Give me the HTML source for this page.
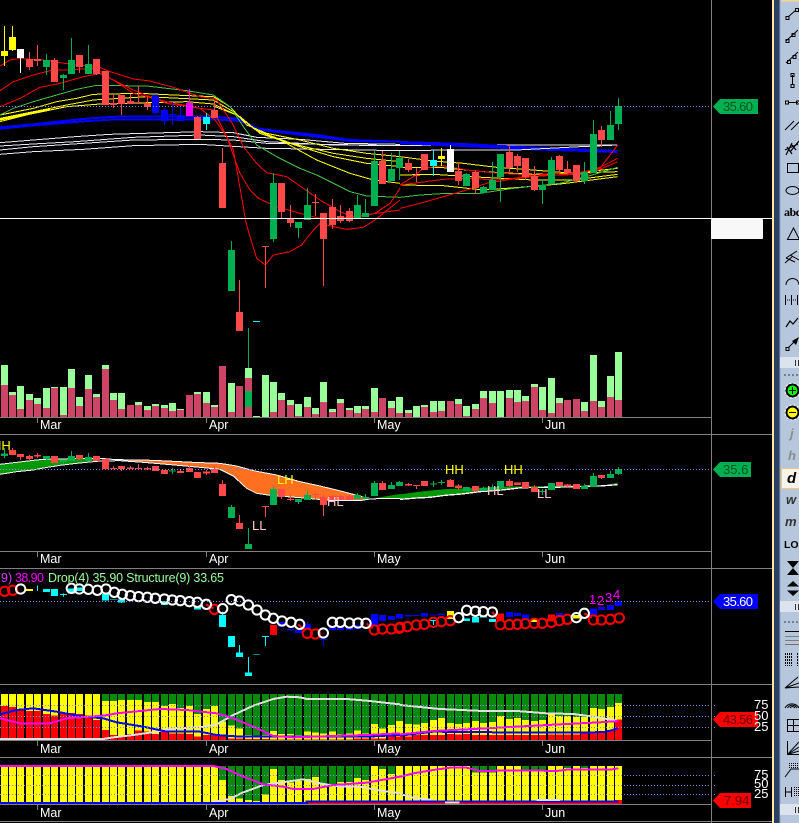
<!DOCTYPE html>
<html>
<head>
<meta charset="utf-8">
<style>
html,body{margin:0;padding:0;background:#000;width:799px;height:823px;overflow:hidden}
svg{display:block;position:absolute;left:0;top:0}
text{font-family:"Liberation Sans",sans-serif}
.c{shape-rendering:crispEdges}
.n{fill:none}
</style>
</head>
<body>
<svg width="799" height="823" viewBox="0 0 799 823">
<rect width="799" height="823" fill="#000"/>

<!-- MAIN MOVING AVERAGES -->
<g class="n c" stroke-width="3" transform="scale(.33333)">
<g stroke="#e6e6f6">
<path d="M0 428 100 420 225 410 330 403 500 398 600 395 700 398 770 412 900 418 1035 430 1200 433"/>
<path d="M0 438 100 432 225 425 400 412 600 405 700 410 800 425 1000 435 1200 437"/>
<path d="M0 450 100 440 250 430 400 420 600 418 700 420 800 430 1200 437"/>
<path d="M0 463 100 455 250 448 400 437 600 433 800 445 1200 452"/>
</g>
<g stroke="#0000ff" stroke-width="6">
<path d="M0 382 100 373 200 362 270 355 350 350 640 350 720 357 770 385 850 395 950 405 1050 420 1200 425"/>
<path d="M0 386 100 376 250 364 350 358 640 358 720 363 770 388 900 404 1050 423 1200 425"/>
</g>
<g stroke="#ffff00">
<path d="M0 358 150 328" stroke-width="8"/>
<path d="M0 345 100 325 170 305 230 295 280 283 420 280 520 285 640 290 690 320 740 375 800 400 900 420 1000 445 1100 460 1200 470"/>
<path d="M0 355 100 335 200 315 280 300 440 290 540 295 640 300 700 335 760 385 850 425 950 480 1050 520 1120 540 1200 550"/>
<path d="M0 365 100 340 200 320 300 312 560 305 640 312 720 350 780 400 900 440 1000 470 1100 490 1200 500"/>
<path d="M640 318 710 345 770 392 880 432 1000 460 1100 475 1200 485"/>
</g>
<path stroke="#44c044" d="M0 345 40 325 100 305 170 285 230 268 290 256 440 258 560 272 640 285 690 320 730 380 770 435 830 470 900 505 950 525 1000 550 1050 575 1100 588 1200 592"/>
<g stroke="#ff0000">
<path d="M0 198 30 180 60 175 90 178 120 180 150 182 180 188 230 195 290 198 330 215 400 237 450 243 520 262 600 290 640 295 650 300 697 370 730 440 770 490 800 518 860 530 960 600 1020 635 1070 655 1125 640 1170 610 1200 565"/>
<path d="M0 272 40 245 100 225 150 212 290 205 330 235 400 270 500 310 600 325 640 330 660 370 700 450 730 620 736 660 750 710 770 775 796 795 820 765 870 755 905 735 940 690 960 670 1000 680 1040 688 1090 682 1125 660 1200 600"/>
<path d="M0 320 60 295 120 262 180 250 250 230 300 220 340 240 400 280 500 305 600 325 645 360 680 410 720 520 750 570 775 595 830 620 900 640 960 655 1020 655 1130 640 1200 630"/>
</g>
</g>
<g class="n c" stroke-width="3" transform="translate(400 80) scale(.33333)">
<path stroke="#e6e6f6" d="M0 197 150 195 470 195 653 195"/>
<g stroke="#0000ff" stroke-width="6">
<path d="M0 186 190 192 400 203 653 213"/>
<path d="M0 190 190 198 400 208 653 216"/>
</g>
<path stroke="#e6e6f6" d="M0 212 150 210 350 210 540 200 653 195"/>
<g stroke="#ffff00">
<path d="M0 230 100 243 190 250 290 262 400 270 520 280 653 265"/>
<path d="M0 262 120 262 250 275 400 283 653 275"/>
<path d="M0 285 100 283 210 290 400 300 520 300 653 283"/>
<path d="M0 315 130 317 250 330 360 322 480 312 653 290"/>
</g>
<path stroke="#44c044" d="M0 352 60 345 140 340 240 340 340 325 480 310 560 290 653 262"/>
<g stroke="#ff0000">
<path d="M0 385 60 370 130 350 200 330 260 310 340 297 400 290 470 285 560 275 600 262 653 235"/>
<path d="M0 315 40 290 70 265 130 257 200 270 300 280 400 285 500 285 600 265 653 195"/>
<path d="M0 315 130 298 200 295 290 300 340 295 450 280 560 285 600 268 653 245"/>
</g>
</g>

<!-- MAIN CANDLES -->
<g class="n c">
<path stroke="#00b050" d="M46.5 54V75M63.5 74V90M71.5 38V74M88.5 45V74M231.5 241V250M248.5 328V407M273.5 173V242M298.5 222V238M307.5 188V220M357.5 195V218M365.5 199V217M374.5 151V206M391.5 153V181M399.5 151V180M466.5 173V186M483.5 186V193M492.5 162V190M500.5 154V202M542.5 179V204M551.5 157V184M584.5 162V184M593.5 120V173M610.5 111V140M618.5 98V130"/>
<path stroke="#ff4848" d="M29.5 52V70M37.5 45V66M54.5 58V82M79.5 55V73M96.5 59V75M105.5 71V105M113.5 94V108M121.5 95V115M130.5 94V104M138.5 86V104M147.5 96V110M197.5 116V139M214.5 100V118M222.5 148V208M239.5 280V331M265.5 246V288M281.5 183V219M290.5 205V227M315.5 194V216M323.5 213V286M332.5 199V229M340.5 205V223M349.5 208V222M382.5 151V184M408.5 159V172M416.5 168V182M424.5 154V170M458.5 162V185M475.5 170V194M509.5 144V174M517.5 154V172M525.5 158V180M534.5 166V191M559.5 155V172M567.5 161V174M576.5 165V181M601.5 126V147"/>
<path stroke="#ffff00" d="M4.5 26V66M12.5 26V51M441.5 148V166"/>
<path stroke="#ffffff" d="M20.5 49V73M450.5 145V172"/>
<path stroke="#0000ff" d="M155.5 95V114M164.5 108V125M172.5 102V125M180.5 106V121"/>
<path stroke="#ff00ff" d="M189.5 89V116"/>
<path stroke="#00ffff" d="M206.5 113V130M433.5 150V176"/>
<!-- volume bars -->
<path stroke="#99ff99" stroke-width="7" d="M4.5 365V417M12.5 392V417M20.5 386V417M29.5 394V417M37.5 398V417M46.5 388V417M54.5 387V417M63.5 387V417M71.5 369V417M79.5 397V417M88.5 375V417M96.5 394V417M105.5 365V417M113.5 393V417M121.5 393V417M138.5 402V417M147.5 406V417M155.5 404V417M164.5 405V417M172.5 403V417M180.5 409V417M197.5 392V417M206.5 392V417M214.5 405V417M231.5 383V417M248.5 368V417M256.5 416V417M265.5 375V417M273.5 382V417M281.5 393V417M290.5 400V417M298.5 404V417M307.5 397V417M315.5 408V417M323.5 382V417M332.5 409V417M340.5 399V417M349.5 408V417M357.5 406V417M365.5 406V417M374.5 388V417M391.5 401V417M399.5 397V417M408.5 410V417M416.5 406V417M424.5 405V417M433.5 401V417M441.5 401V417M458.5 399V417M466.5 406V417M475.5 404V417M483.5 391V417M492.5 391V417M500.5 391V417M509.5 390V417M517.5 390V417M525.5 396V417M534.5 384V417M542.5 387V417M551.5 378V417M559.5 398V417M584.5 402V417M593.5 355V417M601.5 401V417M610.5 376V417M618.5 352V417"/>
<path stroke="#cc4466" stroke-width="7" d="M4.5 385V417M12.5 395V417M20.5 409V417M29.5 400V417M37.5 404V417M46.5 408V417M54.5 388V417M63.5 415V417M71.5 388V417M79.5 406V417M88.5 389V417M96.5 397V417M105.5 369V417M113.5 400V417M121.5 409V417M130.5 405V417M138.5 405V417M147.5 410V417M155.5 406V417M164.5 408V417M172.5 411V417M180.5 410V417M189.5 395V417M197.5 394V417M206.5 403V417M214.5 407V417M222.5 366V417M231.5 412V417M239.5 386V417M248.5 378V417M273.5 412V417M281.5 400V417M290.5 405V417M298.5 416V417M307.5 407V417M315.5 414V417M323.5 402V417M332.5 412V417M340.5 403V417M349.5 410V417M357.5 413V417M365.5 409V417M374.5 412V417M382.5 398V417M391.5 408V417M399.5 413V417M408.5 413V417M424.5 407V417M433.5 412V417M441.5 411V417M450.5 401V417M458.5 404V417M466.5 416V417M475.5 409V417M483.5 398V417M492.5 403V417M509.5 398V417M517.5 402V417M525.5 401V417M534.5 387V417M542.5 410V417M551.5 413V417M559.5 403V417M567.5 400V417M576.5 399V417M584.5 411V417M593.5 401V417M601.5 407V417M610.5 397V417M618.5 400V417"/>
<!-- green, red bodies -->
<path stroke="#00b050" stroke-width="7" d="M46.5 60V67M63.5 75V78M71.5 60V74M88.5 64V74M231.5 250V291M248.5 391V407M273.5 183V239M298.5 222V228M307.5 205V220M357.5 205V218M365.5 213V217M374.5 161V206M391.5 169V181M399.5 158V168M466.5 174V186M483.5 187V193M492.5 180V190M500.5 154V177M542.5 185V190M551.5 160V184M584.5 172V181M593.5 134V173M610.5 125V140M618.5 106V124"/>
<path stroke="#ff4848" stroke-width="7" d="M29.5 59V67M37.5 59V61M54.5 60V82M79.5 55V67M96.5 59V74M105.5 71V105M113.5 103V105M121.5 95V104M130.5 101V104M138.5 103V104M147.5 103V107M197.5 117V139M214.5 110V118M222.5 163V208M239.5 312V331M265.5 246V247M281.5 183V212M290.5 218V223M315.5 202V203M323.5 213V239M332.5 207V225M340.5 216V221M349.5 211V221M382.5 161V184M408.5 163V170M416.5 175V176M424.5 154V170M458.5 171V181M475.5 172V188M509.5 152V168M517.5 156V166M525.5 158V177M534.5 176V190M559.5 156V170M567.5 169V173M576.5 165V181M601.5 130V140"/>
<path stroke="#ffff00" stroke-width="7" d="M4.5 51V56M12.5 37V50M441.5 156V159"/>
<path stroke="#ffffff" stroke-width="7" d="M20.5 49V58M450.5 149V172"/>
<path stroke="#0000ff" stroke-width="7" d="M155.5 95V113M164.5 110V121M172.5 114V115M180.5 115V121"/>
<path stroke="#ff00ff" stroke-width="7" d="M189.5 103V116"/>
<path stroke="#00ffff" stroke-width="7" d="M206.5 117V124M256.5 321V322M433.5 160V166"/>
</g>

<!-- PANEL 2 RIBBON -->
<g transform="translate(0 430) scale(.33333)">
<path fill="#009900" d="M0 103 50 97 100 91 130 88 180 87 240 85 305 86 240 100 180 106 130 114 100 120 50 125 0 133Z"/>
<path fill="#ff6f20" d="M305 87 350 89 430 90 480 92 580 97 660 100 710 108 760 122 830 135 900 155 960 168 1030 185 1110 207 1080 212 1000 212 900 203 810 196 770 190 740 175 700 138 660 118 600 112 500 103 430 97 360 92Z"/>
<path fill="#009900" d="M1110 207 1200 192V205L1160 205Z"/>
<g class="n c" stroke="#fff" stroke-width="3">
<path d="M0 103 50 97 100 91 130 88 180 87 240 85 300 85 350 89 430 90 480 92 580 97 660 100 710 108 760 122 830 135 900 155 960 168 1030 185 1110 207"/>
<path d="M0 133 50 125 100 120 130 114 180 106 230 100 300 93 360 92 430 97 500 103 600 112 660 118 700 138 740 175 770 190 810 196 900 203 1000 212 1080 212 1110 207 1160 205 1200 205"/>
</g>
</g>
<g transform="translate(400 340) scale(.33333)">
<path fill="#009900" d="M0 463 60 455 140 447 250 443 300 440 450 438 620 435 653 428V434L600 438 455 442 365 443 315 449 240 455 185 462 135 466 90 472 50 474 0 478Z"/>
<g class="n c" stroke="#fff" stroke-width="4">
<path d="M0 478 50 474 90 472 135 466 185 462 240 455 315 449 365 443 455 442 600 438 653 434"/>
</g>
</g>
<!-- PANEL 2 CANDLES -->
<g class="n c" transform="translate(0 430) scale(1 .33333)">
<path stroke="#00b050" d="M4.5 54V84M46.5 78V90M63.5 90V102M71.5 63V93M88.5 69V93M172.5 114V132M231.5 225V264M248.5 294V357M273.5 171V225M298.5 207V222M307.5 183V210M357.5 189V207M365.5 192V207M374.5 153V198M391.5 156V177M399.5 153V168"/>
<path stroke="#ff4848" d="M12.5 54V75M20.5 72V90M29.5 75V90M37.5 69V84M54.5 78V99M79.5 75V90M96.5 78V93M105.5 87V117M113.5 108V118M121.5 108V123M130.5 108V117M138.5 102V117M147.5 111V120M155.5 108V123M164.5 120V132M180.5 117V129M189.5 105V126M197.5 126V144M206.5 120V135M214.5 105V129M222.5 150V198M239.5 255V297M265.5 228V261M281.5 177V207M290.5 192V213M315.5 186V207M323.5 192V258M332.5 195V210M340.5 195V210M349.5 195V210M382.5 153V180"/>
<path stroke="#00b050" stroke-width="7" d="M4.5 71V78M46.5 78V87M63.5 90V96M71.5 78V93M88.5 81V93M172.5 122V124M231.5 231V264M248.5 342V357M273.5 177V225M298.5 207V216M307.5 195V210M357.5 195V207M365.5 201V207M374.5 159V198M391.5 165V177M399.5 156V168"/>
<path stroke="#ff4848" stroke-width="7" d="M12.5 60V75M20.5 72V81M29.5 78V87M37.5 75V79M54.5 78V99M79.5 75V87M96.5 78V93M105.5 87V117M113.5 114V117M121.5 108V117M130.5 112V117M138.5 114V117M147.5 114V118M155.5 108V123M164.5 120V132M180.5 123V129M189.5 114V126M197.5 126V144M206.5 125V130M214.5 117V129M222.5 162V198M239.5 279V297M265.5 228V231M281.5 177V201M290.5 207V210M315.5 192V195M323.5 201V225M332.5 198V210M340.5 198V210M349.5 198V210M382.5 159V180"/>
</g>
<g class="n c" transform="translate(0 340) scale(1 .33333)">
<path stroke="#00b050" d="M433.5 423V441M441.5 420V435M466.5 441V453M483.5 440V453M492.5 433V450M500.5 423V450M542.5 447V465M551.5 429V450M584.5 432V447M593.5 399V441M610.5 393V414M618.5 381V405"/>
<path stroke="#ff4848" d="M408.5 429V438M416.5 435V447M424.5 423V438M450.5 417V441M458.5 432V450M475.5 438V456M509.5 417V441M517.5 427V435M525.5 426V444M534.5 435V456M559.5 426V438M567.5 432V441M576.5 432V447M601.5 405V417"/>
<path stroke="#00b050" stroke-width="7" d="M433.5 430V433M441.5 426V429M466.5 441V453M483.5 444V453M492.5 441V450M500.5 423V444M542.5 453V456M551.5 429V450M584.5 438V447M593.5 408V441M610.5 402V414M618.5 387V402"/>
<path stroke="#ff4848" stroke-width="7" d="M408.5 432V436M416.5 435V438M424.5 423V438M450.5 420V441M458.5 437V444M475.5 438V453M509.5 423V438M517.5 427V435M525.5 426V444M534.5 441V456M559.5 426V438M567.5 434V439M576.5 432V447M601.5 405V414"/>
</g>

<!-- PANEL 3 CANDLES -->
<g class="n c" transform="translate(0 565) scale(1 .33333)">
<path stroke="#00ffff" d="M37.5 62V78M63.5 85V95M121.5 100V114M222.5 140V186M248.5 276V333M239.5 240V276M265.5 213V243M433.5 165V180"/>
<path stroke="#0000ff" d="M323.5 222V243M307.5 170V195"/>
<path stroke="#00ffff" stroke-width="7" d="M46.5 72V81M54.5 72V93M63.5 87V90M71.5 70V85M79.5 68V78M105.5 87V107M113.5 103V105M121.5 103V112M164.5 108V120M197.5 125V134M222.5 150V186M231.5 213V246M239.5 262V276M248.5 322V333M256.5 267V269M265.5 213V216M466.5 160V168M475.5 156V172M483.5 155V158M492.5 162V171M433.5 165V168"/>
<path stroke="#ff0000" stroke-width="7" d="M273.5 180V210M500.5 145V165M551.5 148V170"/>
<path stroke="#0000ff" stroke-width="7" d="M281.5 171V186M290.5 192V196M298.5 195V204M307.5 177V192M323.5 222V225M332.5 186V195M340.5 186V195M349.5 186V195M357.5 180V192M374.5 147V180M382.5 150V168M391.5 153V165M399.5 147V160M408.5 150V155M416.5 150V153M424.5 144V155M433.5 149V152M441.5 145V150M509.5 141V156M517.5 144V153M525.5 148V162M559.5 144V155M593.5 130V150M601.5 126V135M610.5 120V135M618.5 108V123"/>
<path stroke="#ffff00" stroke-width="7" d="M29.5 72V78M450.5 138V162M534.5 162V171M576.5 150V160"/>
</g>
<!-- PANEL 3 CIRCLES -->
<g fill="none" stroke-width="6" transform="translate(0 565) scale(.33333)">
<g stroke="#ff0000"><circle cx="14" cy="79" r="14"/><circle cx="38" cy="76" r="14"/><circle cx="643" cy="133" r="14"/><circle cx="922" cy="205" r="14"/><circle cx="946" cy="207" r="14"/><circle cx="1123" cy="195" r="14"/><circle cx="1147" cy="192" r="14"/><circle cx="1174" cy="192" r="14"/><circle cx="1198" cy="190" r="14"/><path d="M618 118 640 130M895 178 915 198M1100 175 1118 190"/></g>
<g stroke="#ffffff"><circle cx="62" cy="72" r="14"/><circle cx="214" cy="70" r="14"/><circle cx="238" cy="72" r="14"/><circle cx="265" cy="73" r="14"/><circle cx="292" cy="76" r="14"/><circle cx="318" cy="72" r="14"/><circle cx="343" cy="82" r="14"/><circle cx="367" cy="88" r="14"/><circle cx="391" cy="92" r="14"/><circle cx="416" cy="95" r="14"/><circle cx="442" cy="97" r="14"/><circle cx="466" cy="100" r="14"/><circle cx="493" cy="102" r="14"/><circle cx="517" cy="105" r="14"/><circle cx="541" cy="107" r="14"/><circle cx="568" cy="110" r="14"/><circle cx="592" cy="112" r="14"/><circle cx="619" cy="118" r="14"/><circle cx="668" cy="131" r="14"/><circle cx="694" cy="104" r="14"/><circle cx="718" cy="108" r="14"/><circle cx="745" cy="120" r="14"/><circle cx="771" cy="135" r="14"/><circle cx="796" cy="150" r="14"/><circle cx="820" cy="160" r="14"/><circle cx="846" cy="168" r="14"/><circle cx="873" cy="172" r="14"/><circle cx="899" cy="178" r="14"/><circle cx="970" cy="204" r="14"/><circle cx="997" cy="172" r="14"/><circle cx="1021" cy="172" r="14"/><circle cx="1048" cy="174" r="14"/><circle cx="1074" cy="174" r="14"/><circle cx="1098" cy="175" r="14"/></g>
</g>
<g fill="none" stroke-width="6" transform="translate(400 565) scale(.33333)">
<g stroke="#ff0000"><circle cx="0" cy="187" r="14"/><circle cx="22" cy="185" r="14"/><circle cx="49" cy="180" r="14"/><circle cx="73" cy="178" r="14"/><circle cx="100" cy="172" r="14"/><circle cx="124" cy="170" r="14"/><circle cx="151" cy="167" r="14"/><circle cx="301" cy="179" r="14"/><circle cx="328" cy="179" r="14"/><circle cx="352" cy="178" r="14"/><circle cx="376" cy="176" r="14"/><circle cx="403" cy="175" r="14"/><circle cx="427" cy="175" r="14"/><circle cx="454" cy="172" r="14"/><circle cx="478" cy="167" r="14"/><circle cx="502" cy="163" r="14"/><circle cx="580" cy="165" r="14"/><circle cx="604" cy="165" r="14"/><circle cx="631" cy="163" r="14"/><circle cx="658" cy="159" r="14"/><path d="M277 141 295 165M553 145 575 158"/></g>
<g stroke="#ffffff"><circle cx="176" cy="158" r="14"/><circle cx="200" cy="136" r="14"/><circle cx="226" cy="139" r="14"/><circle cx="250" cy="140" r="14"/><circle cx="277" cy="141" r="14"/><circle cx="529" cy="158" r="14"/><circle cx="553" cy="145" r="14"/></g>
</g>

<!-- PANEL 4 BARS -->
<g class="n c" stroke-width="7" transform="translate(0 685) scale(1 .33333)">
<path stroke="#0a8a0a" d="M105.5 27V165M113.5 27V165M121.5 27V165M130.5 27V165M138.5 27V165M147.5 27V165M155.5 27V165M164.5 27V165M172.5 27V165M180.5 27V165M189.5 27V165M197.5 27V165M206.5 27V165M214.5 27V165M222.5 27V165M231.5 27V165M239.5 27V165M248.5 27V165M256.5 27V165M265.5 27V165M273.5 27V165M281.5 27V165M290.5 27V165M298.5 27V165M307.5 27V165M315.5 27V165M323.5 27V165M332.5 27V165M340.5 27V165M349.5 27V165M357.5 27V165M365.5 27V165M374.5 27V165M382.5 27V165M391.5 27V165M399.5 27V165M408.5 27V165M416.5 27V165M424.5 27V165M433.5 27V165M441.5 27V165M450.5 27V165M458.5 27V165M466.5 27V165M475.5 27V165M483.5 27V165M492.5 27V165M500.5 27V165M509.5 27V165M517.5 27V165M525.5 27V165M534.5 27V165M542.5 27V165M551.5 27V165M559.5 27V165M567.5 27V165M576.5 27V165M584.5 27V165M593.5 27V165M601.5 27V165M610.5 27V165M618.5 27V165"/>
<path stroke="#ffff00" d="M4.5 27V165M12.5 27V165M20.5 27V165M29.5 27V165M37.5 27V165M46.5 27V165M54.5 27V165M63.5 27V165M71.5 27V165M79.5 27V165M88.5 27V165M96.5 27V165M105.5 48V165M113.5 48V165M121.5 45V165M130.5 45V165M138.5 45V165M147.5 51V165M155.5 51V165M164.5 63V165M172.5 57V165M180.5 69V165M189.5 63V165M197.5 87V165M206.5 72V165M214.5 63V165M222.5 110V165M231.5 122V165M239.5 130V165M248.5 150V165M256.5 153V165M265.5 150V165M273.5 138V165M281.5 147V165M290.5 147V165M298.5 150V165M307.5 140V165M315.5 142V165M323.5 145V165M332.5 140V165M340.5 148V165M349.5 145V165M357.5 137V165M365.5 145V165M374.5 117V165M382.5 130V165M391.5 120V165M399.5 108V165M408.5 117V165M416.5 118V165M424.5 114V165M433.5 105V165M441.5 99V165M450.5 114V165M458.5 117V165M466.5 114V165M475.5 108V165M483.5 114V165M492.5 111V165M500.5 93V165M509.5 102V165M517.5 99V165M525.5 105V165M534.5 108V165M542.5 105V165M551.5 87V165M559.5 93V165M567.5 93V165M576.5 96V165M584.5 96V165M593.5 69V165M601.5 72V165M610.5 66V165M618.5 54V165"/>
<path stroke="#ff0000" d="M4.5 63V165M12.5 66V165M20.5 72V165M29.5 78V165M37.5 78V165M46.5 87V165M54.5 92V165M63.5 84V165M71.5 84V165M79.5 87V165M88.5 92V165M96.5 105V165M105.5 135V165M113.5 150V165M121.5 155V165M130.5 147V165M138.5 137V165M147.5 140V165M155.5 147V165M164.5 140V165M172.5 145V165M180.5 145V165M189.5 147V165M197.5 155V165M206.5 150V165M214.5 150V165M222.5 152V165M231.5 160V165M239.5 160V165M248.5 162V165M256.5 162V165M265.5 162V165M273.5 163V165M281.5 163V165M290.5 163V165M298.5 163V165M307.5 163V165M315.5 163V165M323.5 163V165M332.5 163V165M340.5 163V165M349.5 163V165M357.5 160V165M365.5 160V165M374.5 160V165M382.5 160V165M391.5 155V165M399.5 155V165M408.5 155V165M416.5 150V165M424.5 150V165M433.5 150V165M441.5 150V165M450.5 147V165M458.5 148V165M466.5 147V165M475.5 150V165M483.5 150V165M492.5 150V165M500.5 150V165M509.5 150V165M517.5 150V165M525.5 150V165M534.5 150V165M542.5 150V165M551.5 148V165M559.5 148V165M567.5 148V165M576.5 148V165M584.5 146V165M593.5 140V165M601.5 140V165M610.5 135V165M618.5 103V165"/>
</g>
<!-- PANEL 5 BARS -->
<g class="n c" stroke-width="7" transform="translate(0 685) scale(1 .33333)">
<path stroke="#0a8a0a" d="M222.5 243V352M231.5 243V352M239.5 243V352M248.5 243V352M256.5 243V352M265.5 243V352M273.5 243V352M281.5 243V352M290.5 243V352M298.5 243V352M307.5 243V352M315.5 243V352M323.5 243V352M332.5 243V352M340.5 243V352M349.5 243V352M357.5 243V352M365.5 243V352M382.5 243V352M391.5 243V352M475.5 243V262M483.5 243V262M492.5 243V262M525.5 243V255M534.5 243V258M542.5 243V258M567.5 243V249M584.5 243V249"/>
<path stroke="#ffff00" d="M4.5 243V352M12.5 243V352M20.5 243V352M29.5 243V352M37.5 243V352M46.5 243V352M54.5 243V352M63.5 243V352M71.5 243V352M79.5 243V352M88.5 243V352M96.5 243V352M105.5 243V352M113.5 243V352M121.5 243V352M130.5 243V352M138.5 243V352M147.5 243V352M155.5 243V352M164.5 243V352M172.5 243V352M180.5 243V352M189.5 243V352M197.5 243V352M206.5 243V352M214.5 243V352M222.5 285V352M231.5 333V352M239.5 340V352M248.5 345V352M256.5 348V352M265.5 328V352M273.5 252V352M281.5 285V352M290.5 293V352M298.5 288V352M307.5 282V352M315.5 276V352M323.5 297V352M332.5 303V352M340.5 291V352M349.5 291V352M357.5 279V352M365.5 285V352M374.5 243V352M382.5 252V352M391.5 267V352M399.5 243V352M408.5 243V352M416.5 243V352M424.5 243V352M433.5 243V352M441.5 243V352M450.5 243V352M458.5 243V352M466.5 243V352M475.5 262V352M483.5 262V352M492.5 262V352M500.5 243V352M509.5 243V352M517.5 243V352M525.5 255V352M534.5 258V352M542.5 258V352M551.5 243V352M559.5 243V352M567.5 249V352M576.5 243V352M584.5 249V352M593.5 243V352M601.5 243V352M610.5 243V352M618.5 243V352"/>
</g>
<rect class="c" x="308" y="801" width="314" height="3" fill="#ff0000"/>
<rect class="c" x="615" y="800" width="7" height="4" fill="#ff0000"/>

<!-- PANEL 4/5 LINES -->
<g class="n c" stroke-width="6" transform="translate(0 685) scale(.33333)">
<path stroke="#e0e0e0" d="M0 162 310 162 340 157 400 150 470 140 520 130 600 127 650 118 700 90 760 62 820 42 860 35 900 37 920 42 1040 42 1100 47 1200 58"/>
<path stroke="#0000ff" d="M0 88 50 75 100 70 170 80 250 95 310 100 350 112 430 125 500 140 600 140 650 150 720 155 1100 155 1200 150"/>
<path stroke="#ff00ff" d="M0 100 60 115 150 115 200 100 310 92 350 85 420 78 480 72 560 75 650 85 700 100 760 125 820 153 880 157 1000 153 1100 150 1200 145"/>
<path stroke="#e0e0e0" d="M640 350 690 342 730 322 790 300 860 290 910 283 960 295 1020 305 1080 305 1130 315 1200 325"/>
<path stroke="#ff00ff" d="M0 243 640 243 680 252 730 275 790 298 850 305 880 312 940 312 1000 300 1100 293 1200 275"/>
<path stroke="#0000ff" d="M0 354 920 354 920 350 1200 350"/>
</g>
<g class="n c" stroke-width="6" transform="translate(400 685) scale(.33333)">
<path stroke="#e0e0e0" d="M0 60 50 65 120 72 250 78 350 78 440 85 520 87 580 95 650 107"/>
<path stroke="#0000ff" d="M0 152 100 140 300 142 560 143 620 140 655 130"/>
<path stroke="#ff00ff" d="M0 148 100 138 220 132 350 125 480 118 600 112 655 108"/>
<path stroke="#ff00ff" d="M0 275 40 265 100 255 150 248 200 248 240 258 370 256 470 258 500 254 630 254 655 250"/>
<path stroke="#e0e0e0" d="M0 327 40 338 100 345"/>
<path stroke="#0000ff" d="M0 350 655 350"/>
<path stroke="#e0e0e0" d="M135 352H178M410 345H480"/>
</g>

<!-- DOTTED PRICE / LEVEL LINES -->
<g class="n c" stroke="#8a8ae6" stroke-dasharray="1 2">
<path d="M0 106.5H711M0 469.5H711M0 601.5H711"/>
<path d="M0 705.5H716M0 716.5H716M0 727.5H716M0 775.5H716M0 785.5H716M0 794.5H716"/>
</g>

<!-- FRAME LINES -->
<g class="n c" stroke="#808080">
<path d="M711.5 0V823"/>
<path d="M0 417.5H711M0 434.5H772M0 551.5H711M0 568.5H772M0 684.5H772M0 740.5H711M0 757.5H772M0 804.5H711M0 821.5H772"/>
<path d="M37.5 417V423M206.5 417V423M374.5 417V423M542.5 417V423M37.5 551V557M206.5 551V557M374.5 551V557M542.5 551V557M37.5 740V746M206.5 740V746M374.5 740V746M542.5 740V746M37.5 804V810M206.5 804V810M374.5 804V810M542.5 804V810"/>
</g>
<path class="c" d="M0 218.5H772" stroke="#fff"/>
<rect x="711" y="219" width="52" height="20" rx="1" fill="#f8f8f8"/>

<!-- DATE LABELS -->
<g fill="#fff" font-size="12.5">
<text x="40" y="429">Mar</text><text x="209" y="429">Apr</text><text x="377" y="429">May</text><text x="545" y="429">Jun</text>
<text x="40" y="563">Mar</text><text x="209" y="563">Apr</text><text x="377" y="563">May</text><text x="545" y="563">Jun</text>
<text x="40" y="753">Mar</text><text x="209" y="753">Apr</text><text x="377" y="753">May</text><text x="545" y="753">Jun</text>
<text x="40" y="817">Mar</text><text x="209" y="817">Apr</text><text x="377" y="817">May</text><text x="545" y="817">Jun</text>
</g>

<!-- STRUCTURE LABELS -->
<g font-size="13">
<text x="-8" y="450" fill="#ffff00">HH</text>
<text x="445" y="474" fill="#ffff00">HH</text>
<text x="504" y="474" fill="#ffff00">HH</text>
<text x="277" y="484" fill="#ffff00">LH</text>
<text x="327" y="506" fill="#ffc8c8">HL</text>
<text x="252" y="530" fill="#ffc8c8">LL</text>
<text x="487" y="495" fill="#ffc8c8">HL</text>
<text x="537" y="498" fill="#ffc8c8">LL</text>
<text x="589" y="604" fill="#ff00ff">1</text>
<text x="597" y="605" fill="#ff00ff">2</text>
<text x="605" y="602" fill="#ff00ff">3</text>
<text x="613" y="599" fill="#ff00ff">4</text>
</g>
<g font-size="12.5">
<text x="1" y="582" fill="#d040ff">9)</text>
<text x="15" y="582" fill="#ff00ff" textLength="29">38.90</text>
<text x="48" y="582" fill="#99ff99" textLength="176">Drop(4) 35.90 Structure(9) 33.65</text>
</g>

<!-- PRICE TAGS -->
<path d="M713 106.5 720 99H758V114H720Z" fill="#00b050"/>
<text x="723" y="111" font-size="13" fill="#052" textLength="30">35.60</text>
<path d="M713 469.5 720 462H751V477H720Z" fill="#00b050"/>
<text x="723" y="474" font-size="13" fill="#052">35.6</text>
<path d="M713 601.5 720 594H758V609H720Z" fill="#0000ff"/>
<text x="723" y="606" font-size="13" fill="#fff" textLength="30">35.60</text>
<path d="M713 719.5 720 712H758V727H720Z" fill="#ff0000"/>
<text x="723" y="724" font-size="13" fill="#600" textLength="30">43.56</text>
<path d="M713 800.5 720 793H751V808H720Z" fill="#ff0000"/>
<text x="724" y="805" font-size="13" fill="#600">7.94</text>
<g fill="#fff" font-size="13">
<text x="754" y="709">75</text><text x="754" y="720">50</text><text x="754" y="731">25</text>
<text x="754" y="779">75</text><text x="754" y="788">50</text><text x="754" y="798">25</text>
</g>

<!-- TOOLBAR -->
<rect x="772" y="0" width="2" height="823" fill="#ffe9a0"/>
<rect x="774" y="0" width="5.5" height="823" fill="#2d3f63"/>
<rect x="779.5" y="0" width="19.5" height="823" fill="#b6c7dd"/>
<rect x="779.5" y="0" width="1" height="823" fill="#93a7c3"/>
<rect x="781" y="0" width="18" height="1.5" fill="#f5d78e"/>
<g class="c">
<rect x="780" y="357" width="19" height="11" fill="#dbe3ee"/>
<rect x="780" y="601" width="19" height="11" fill="#dbe3ee"/>
<rect x="780" y="804" width="19" height="11" fill="#dbe3ee"/>
<path d="M795.5 360V366M798.5 360V366M795.5 604V610M798.5 604V610M795.5 807V813M798.5 807V813" stroke="#333" fill="none"/>
<path d="M784 374h2v2h-2zM788 374h2v2h-2zM792 374h2v2h-2zM796 374h2v2h-2zM784 621h2v2h-2zM788 621h2v2h-2zM792 621h2v2h-2zM796 621h2v2h-2z" fill="#6d7f99"/>
<rect x="781.5" y="468.5" width="18" height="20" fill="#f6f4ea" stroke="#f2c878"/>
</g>
<g fill="none" stroke="#000" stroke-width="1">
<path d="M788 17 796 10"/><rect x="786" y="16.5" width="3" height="3"/><rect x="795.5" y="8.5" width="3" height="3"/>
<path d="M786 41 798 30"/><rect x="786" y="39.5" width="3" height="3"/><rect x="792" y="33.5" width="3" height="3"/>
<path d="M786 63 798 52"/><rect x="787.5" y="60.5" width="3" height="3"/><rect x="793" y="55.5" width="3" height="3"/>
<path d="M792.5 75V85"/><rect x="791" y="73.5" width="3" height="3"/><rect x="791" y="84.5" width="3" height="3"/>
<path d="M788 102.5H798"/><rect x="785.5" y="101" width="3" height="3"/><rect x="796.5" y="101" width="3" height="3"/>
<path d="M785 130 794 121M791 130 799 122"/>
<path d="M786 155 792 143M790 152 799 141M785 150 798 144M787 147 792 154M791 144 796 150" stroke-width="1.2"/>
<rect x="787.5" y="163.5" width="11" height="9"/>
<ellipse cx="792.5" cy="190.5" rx="6.5" ry="4"/>
<path d="M787.5 239.5 793.5 228 799.5 239.5Z"/>
<path d="M786 258 797 251M786 258 795 262M790 255 799 260M785 263 793 256"/>
<path d="M786 285A6.5 6.5 0 0 1 799 285"/>
<path d="M785.5 295V305M791.5 295V305M797.5 295V305" /><path d="M787 300h3M793 300h3" stroke-dasharray="1 1"/>
<path d="M786 327 790 321 793 324 798 318" stroke-width="1.2"/>
<path d="M788 348 794 342"/><rect x="786" y="347.5" width="3" height="3"/>
</g>
<path d="M792 341 799 337 796 345Z" fill="#000"/>
<text x="784" y="216" font-size="12" font-weight="bold" style="font-family:'Liberation Serif',serif" fill="#000" textLength="17">abc</text>
<!-- zoom in / out -->
<circle cx="792.5" cy="390.5" r="6" fill="#00ff00" stroke="#000" stroke-width="2"/>
<circle cx="792.5" cy="390.5" r="7.5" fill="none" stroke="#fff" stroke-width="1" stroke-dasharray="2 2"/>
<path d="M789 390.5H796M792.5 387V394" stroke="#000" stroke-width="1.4" class="c"/>
<circle cx="792.5" cy="412.5" r="6" fill="#ffff00" stroke="#000" stroke-width="2"/>
<circle cx="792.5" cy="412.5" r="7.5" fill="none" stroke="#fff" stroke-width="1" stroke-dasharray="2 2"/>
<path d="M789 412.5H796" stroke="#000" stroke-width="1.4" class="c"/>
<!-- periodicity -->
<g font-weight="bold" font-style="italic" style="font-family:'Liberation Serif',serif" font-size="13">
<text x="790" y="438" fill="#8c8c8c">j</text>
<text x="788" y="460" fill="#8c8c8c">h</text>
<text x="787" y="483" fill="#000" font-size="15">d</text>
<text x="786" y="504" fill="#333">w</text>
<text x="785" y="526" fill="#333">m</text>
</g>
<text x="784" y="548" font-size="10.5" font-weight="bold" fill="#000">LOG</text>
<!-- hourglass + diamond -->
<path d="M787 561H799L793 568 799 575H787L793 568Z" fill="#000"/>
<path d="M793 581 799 586.5H787ZM793 596 787 590.5H799Z" fill="#000"/>
<!-- lower tools -->
<g fill="none" stroke="#000" class="c">
<path d="M785 631.5H799"/><path d="M785 636.5H799" stroke="#808080"/><path d="M785 640.5H799" stroke="#8a7a6a"/><path d="M785 644.5H799" stroke="#707070"/>
<path d="M785.5 653V666M787.5 653V666M789.5 653V666M791.5 653V666M797.5 653V666" stroke-dasharray="2 1"/>
</g>
<g fill="none" stroke="#000">
<path d="M785 688 798 677M785 688 799 683M785 688 799 687"/>
<path d="M785 708A8 8 0 0 1 799 708M787.5 708A5.5 5.5 0 0 1 797 708M790 708A3 3 0 0 1 795 708"/>
<path class="c" d="M787.5 719.5H799.5V731.5H787.5ZM787.5 725.5H799.5M793.5 719.5V731.5"/>
<path d="M787.5 741V754.5H799M787.5 754.5 799 742M787.5 754.5 799 747M787.5 754.5 799 751"/>
<path d="M785 777 791 769H799"/>
<path class="c" d="M789 763.5H799M789 765.5H799M789 767.5H799" stroke-dasharray="1 1"/>
<path class="c" d="M785.5 787V797M791.5 787V797M785.5 792H791.5"/>
<path class="c" d="M794.5 787V797M796.5 787V797M798.5 787V797" stroke-dasharray="1 1"/>
</g>
</svg>
</body>
</html>
